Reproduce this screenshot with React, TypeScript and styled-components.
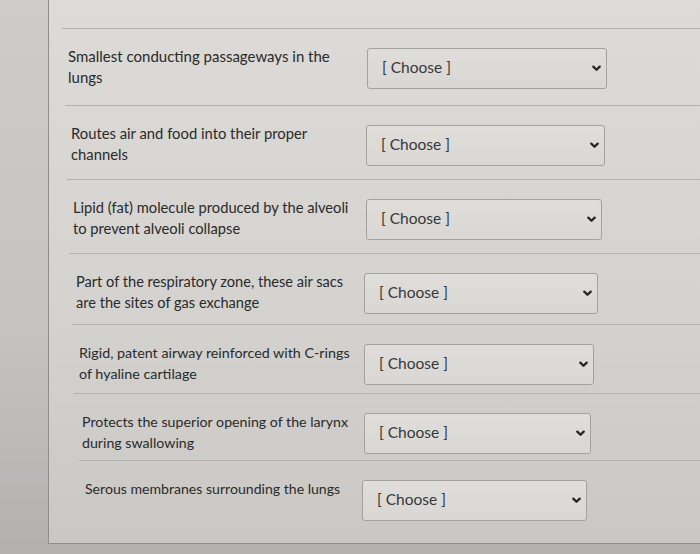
import React from "react";
import styled, { createGlobalStyle } from "styled-components";

const Global = createGlobalStyle`
  html, body { margin: 0; padding: 0; }
  body { font-family: Lato, "Open Sans", "Liberation Sans", sans-serif; }
`;

const Page = styled.div`
  display: flex;
  width: 700px;
  height: 554px;
  overflow: hidden;
  background: linear-gradient(180deg, #cdccc9 0%, #c4c3c0 60%, #b2b1af 100%);
`;

const Gutter = styled.div`
  flex: none;
  width: 48px;
`;

const Panel = styled.div`
  flex: 1;
  box-sizing: border-box;
  height: 544px;
  padding-top: 28px;
  border-left: 1px solid #8f8e8c;
  border-bottom: 1px solid #8f8e8c;
  background: linear-gradient(180deg, #dcdbd8 0%, #d4d3d0 55%, #c9c8c5 100%);
  display: flex;
  flex-direction: column;
`;

const Row = styled.div<{ $indent: number; $h: number; $pad: number }>`
  box-sizing: border-box;
  margin-left: ${(p) => p.$indent}px;
  height: ${(p) => p.$h}px;
  border-top: 1px solid #b3b2af;
  padding: 17px 0 0 ${(p) => p.$pad}px;
  display: flex;
  align-items: flex-start;
`;

const Label = styled.div<{ $w: number; $size: number }>`
  flex: none;
  width: ${(p) => p.$w}px;
  font-size: ${(p) => p.$size}px;
  line-height: 21px;
  color: #2a2a2a;
  white-space: pre-line;
`;

const Select = styled.div<{ $w: number }>`
  flex: none;
  box-sizing: border-box;
  width: ${(p) => p.$w}px;
  height: 41px;
  margin-top: 2px;
  border: 1px solid #a3a2a0;
  border-radius: 3px;
  background: linear-gradient(180deg, #dfdedb, #d8d7d4);
  display: flex;
  align-items: center;
  justify-content: space-between;
  padding: 0 5px 0 14px;
`;

const Choose = styled.span`
  font-size: 15.5px;
  color: #383838;
  margin-top: -3px;
`;

const Chevron = () => (
  <svg width="9" height="7" viewBox="0 0 9 7">
    <polyline
      points="1.3,1.6 4.5,4.8 7.7,1.6"
      fill="none"
      stroke="#262626"
      strokeWidth="2.3"
      strokeLinecap="round"
      strokeLinejoin="round"
    />
  </svg>
);

type Item = { text: string; sep: number; tx: number; sx: number; sr: number; h: number; fs: number };

const items: Item[] = [
  { text: "Smallest conducting passageways in the\nlungs", sep: 62, tx: 68, sx: 367, sr: 607, h: 77, fs: 15 },
  { text: "Routes air and food into their proper\nchannels", sep: 65, tx: 71, sx: 366, sr: 605, h: 74, fs: 14.8 },
  { text: "Lipid (fat) molecule produced by the alveoli\nto prevent alveoli collapse", sep: 67, tx: 73, sx: 366, sr: 602, h: 74, fs: 14.7 },
  { text: "Part of the respiratory zone, these air sacs\nare the sites of gas exchange", sep: 69, tx: 76, sx: 364, sr: 598, h: 71, fs: 14.6 },
  { text: "Rigid, patent airway reinforced with C-rings\nof hyaline cartilage", sep: 72, tx: 79, sx: 364, sr: 594, h: 69, fs: 14.3 },
  { text: "Protects the superior opening of the larynx\nduring swallowing", sep: 74, tx: 82, sx: 364, sr: 591, h: 67, fs: 14.2 },
  { text: "Serous membranes surrounding the lungs", sep: 79, tx: 85, sx: 362, sr: 587, h: 83, fs: 14.1 },
];

const PANEL_X = 49;

export default function App() {
  return (
    <>
      <Global />
      <Page>
        <Gutter />
        <Panel>
          {items.map((it, i) => (
            <Row key={i} $indent={it.sep - PANEL_X} $h={it.h} $pad={it.tx - it.sep}>
              <Label $w={it.sx - it.tx} $size={it.fs}>{it.text}</Label>
              <Select $w={it.sr - it.sx}>
                <Choose>[ Choose ]</Choose>
                <Chevron />
              </Select>
            </Row>
          ))}
        </Panel>
      </Page>
    </>
  );
}
